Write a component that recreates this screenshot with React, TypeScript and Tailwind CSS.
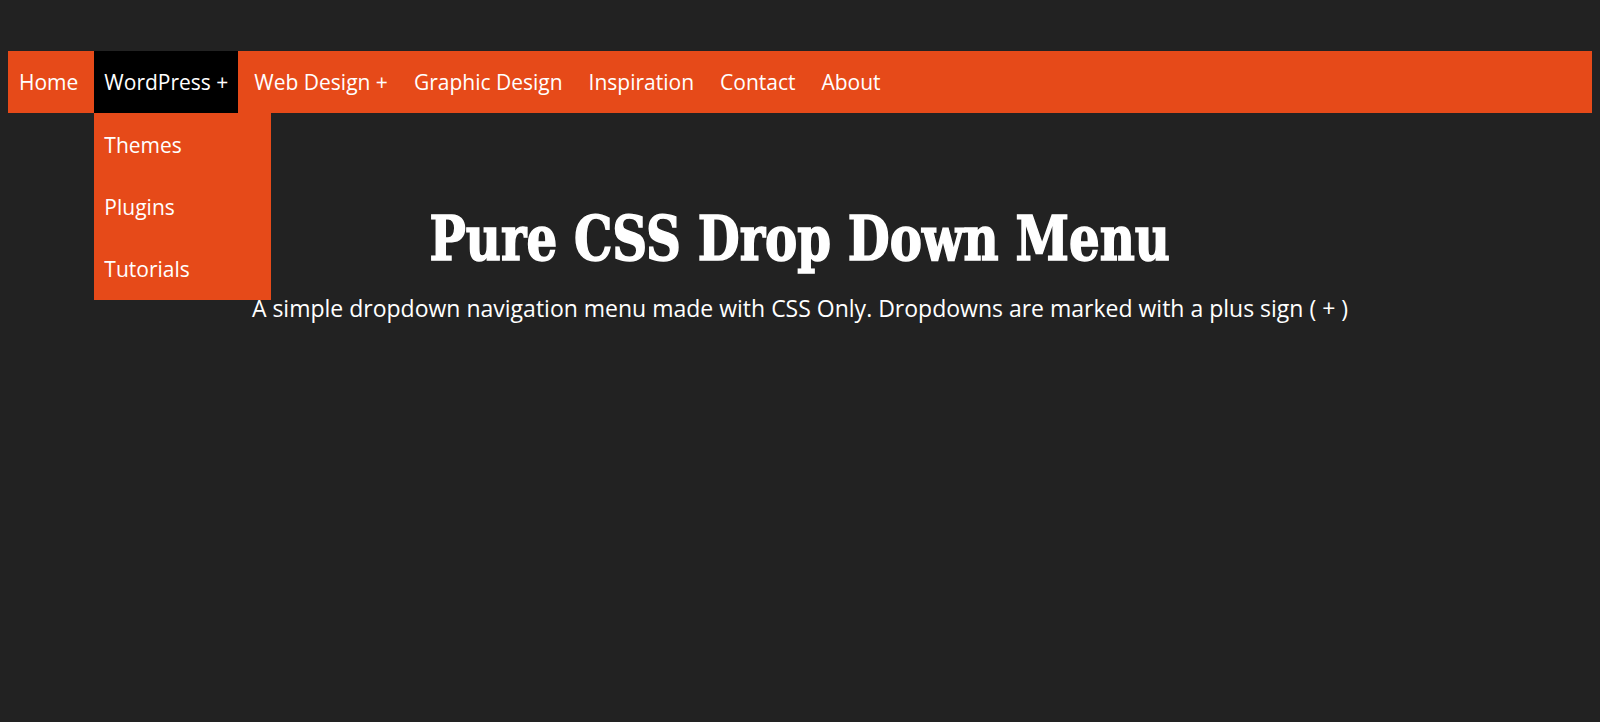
import React from "react";

const items = [
  { label: "Home" },
  { label: "WordPress +", active: true, sub: ["Themes", "Plugins", "Tutorials"] },
  { label: "Web Design +" },
  { label: "Graphic Design" },
  { label: "Inspiration" },
  { label: "Contact" },
  { label: "About" },
];

export default function App() {
  return (
    <div
      className="min-h-[722px] w-full bg-[#222222] px-2 pt-[51px] text-white"
      style={{ fontFamily: '"Open Sans", "Noto Sans", sans-serif' }}
    >
      <nav className="relative z-10 flex h-[62px] gap-[6px] bg-[#e64a19] pl-[1px]">
        {items.map((it) => (
          <div
            key={it.label}
            className={`relative flex h-full items-center px-[10px] pt-[2px] text-[21px] ${it.active ? "bg-black" : ""}`}
          >
            {it.label}
            {it.sub && (
              <div className="absolute left-0 top-full w-[177px] bg-[#e64a19] pb-[1px]">
                {it.sub.map((s) => (
                  <div key={s} className="flex h-[62px] items-center px-[10px] pt-[3px] text-[21px]">
                    {s}
                  </div>
                ))}
              </div>
            )}
          </div>
        ))}
      </nav>
      <div className="flex flex-col items-center pt-[95px]">
        <h1
          className="origin-center text-[61px] font-bold leading-none text-white [-webkit-text-stroke:1.5px_white] [font-stretch:condensed] [transform:scaleX(0.88)]"
          style={{ fontFamily: '"DejaVu Serif", serif' }}
        >
          Pure CSS Drop Down Menu
        </h1>
        <p className="mt-[28px] text-[23px] leading-none">
          A simple dropdown navigation menu made with CSS Only. Dropdowns are marked with a plus sign ( + )
        </p>
      </div>
    </div>
  );
}
